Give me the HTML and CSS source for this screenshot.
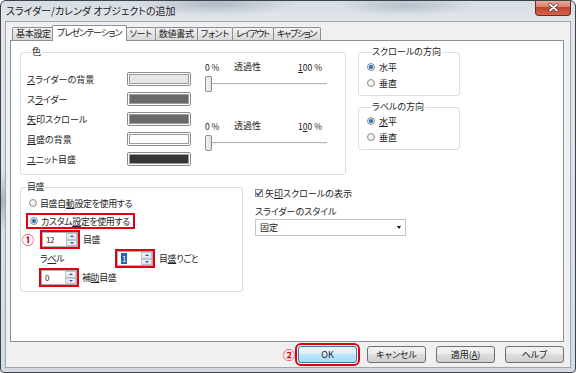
FILE: index.html
```html
<!DOCTYPE html>
<html lang="ja">
<head>
    <meta charset="UTF-8">
    <title>スライダー/カレンダ オブジェクトの追加</title>
    <link rel="stylesheet" href="styles.css">
</head>
<body>
    <div class="window">
        <div class="titlebar">
            <span class="title">スライダー/カレンダ オブジェクトの追加</span>
            <span class="close">
                <svg width="11" height="9" viewBox="0 0 11 9">
                    <path d="M2 1.5 L9 7.5 M9 1.5 L2 7.5" stroke="#6b2a20" stroke-width="3.2" stroke-linecap="round"/>
                    <path d="M2 1.5 L9 7.5 M9 1.5 L2 7.5" stroke="#ffffff" stroke-width="1.8" stroke-linecap="round"/>
                </svg>
            </span>
        </div>

        <div class="client">
            <ul class="tabs">
                <li class="tab">基本設定</li>
                <li class="tab active">プレゼンテーション</li>
                <li class="tab">ソート</li>
                <li class="tab">数値書式</li>
                <li class="tab">フォント</li>
                <li class="tab tight">レイアウト</li>
                <li class="tab tight">キャプション</li>
            </ul>

            <div class="panel">
                <div class="top-row">
                    <fieldset class="group colors">
                        <legend>色</legend>
                        <div class="colors-body">
                            <div class="swatch-list">
                                <div class="swatch-row"><span class="lbl"><u>ス</u>ライダーの背景</span><span class="swatch"><i class="sw-light"></i></span></div>
                                <div class="swatch-row"><span class="lbl">ス<u>ラ</u>イダー</span><span class="swatch"><i class="sw-mid"></i></span></div>
                                <div class="swatch-row"><span class="lbl"><u>矢</u>印スクロール</span><span class="swatch"><i class="sw-mid"></i></span></div>
                                <div class="swatch-row"><span class="lbl"><u>目</u>盛の背景</span><span class="swatch"><i class="sw-white"></i></span></div>
                                <div class="swatch-row"><span class="lbl"><u>ユ</u>ニット目盛</span><span class="swatch"><i class="sw-dark"></i></span></div>
                            </div>
                            <div class="sliders">
                                <div class="slider-block">
                                    <div class="slider-labels"><span class="min">0 %</span><span>透過性</span><span class="max"><u>1</u>00 %</span></div>
                                    <div class="slider"><span class="thumb"></span><span class="track"></span></div>
                                </div>
                                <div class="slider-block second">
                                    <div class="slider-labels"><span class="min">0 %</span><span>透過性</span><span class="max">1<u>0</u>0 %</span></div>
                                    <div class="slider"><span class="thumb"></span><span class="track"></span></div>
                                </div>
                            </div>
                        </div>
                    </fieldset>

                    <div class="dir-col">
                        <fieldset class="group dir">
                            <legend>スクロールの方向</legend>
                            <div class="radio"><span class="dot checked"></span><span>水平</span></div>
                            <div class="radio"><span class="dot"></span><span>垂直</span></div>
                        </fieldset>
                        <fieldset class="group dir second">
                            <legend>ラベルの方向</legend>
                            <div class="radio"><span class="dot checked"></span><span><u>水</u>平</span></div>
                            <div class="radio"><span class="dot"></span><span>垂直</span></div>
                        </fieldset>
                    </div>
                </div>

                <div class="bottom-row">
                    <fieldset class="group ticks">
                        <legend>目盛</legend>
                        <div class="radio indent"><span class="dot"></span><span>目盛自<u>動</u>設定を使用する</span></div>
                        <div class="mark-row">
                            <span class="mark-box radio-box"><span class="radio"><span class="dot checked"></span><span>カスタム<u>設</u>定を使用する</span></span></span>
                        </div>
                        <div class="spin-row first">
                            <span class="num-mark">①</span>
                            <span class="mark-box">
                                <span class="spin"><span class="spin-val">12</span><span class="spin-btns"><b class="up"></b><b class="down"></b></span></span>
                            </span>
                            <span>目盛</span>
                        </div>
                        <div class="spin-row label-row">
                            <span class="row-lbl">ラ<u>ベ</u>ル</span>
                            <span class="mark-box">
                                <span class="spin"><span class="spin-val"><em class="sel">1</em></span><span class="spin-btns"><b class="up"></b><b class="down"></b></span></span>
                            </span>
                            <span>目<u>盛</u>りごと</span>
                        </div>
                        <div class="spin-row minor">
                            <span class="mark-box">
                                <span class="spin"><span class="spin-val">0</span><span class="spin-btns"><b class="up"></b><b class="down"></b></span></span>
                            </span>
                            <span>補<u>助</u>目盛</span>
                        </div>
                    </fieldset>

                    <div class="style-col">
                        <div class="check-row">
                            <span class="check">
                                <svg width="8" height="8" viewBox="0 0 8 8"><path d="M1.3 4.2 L3.2 6.2 L6.8 1.3" fill="none" stroke="#33457a" stroke-width="1.4"/></svg>
                            </span>
                            <span>矢<u>印</u>スクロールの表示</span>
                        </div>
                        <div class="style-label">スライダーのスタイル</div>
                        <div class="combo"><span>固定</span><span class="arrow"></span></div>
                    </div>
                </div>
            </div>

            <div class="buttons">
                <span class="ok-wrap">
                    <span class="num-mark">②</span>
                    <button class="btn default mark-outline">OK</button>
                </span>
                <button class="btn">キャンセル</button>
                <button class="btn">適用(<u>A</u>)</button>
                <button class="btn">ヘルプ</button>
            </div>
        </div>
    </div>
</body>
</html>
```

FILE: styles.css
```css
* {
    box-sizing: border-box;
}
body {
    margin: 0;
    font-family: "Noto Sans CJK JP", "Liberation Sans", sans-serif;
    font-size: 9px;
    font-feature-settings: "palt";
    color: #222222;
    background: #ffffff;
}
u {
    text-underline-offset: 1px;
}

/* window frame */
.window {
    width: 576px;
    height: 373px;
    border: 1px solid #3f4348;
    border-radius: 6px 6px 4px 4px;
    overflow: hidden;
    display: flex;
    flex-direction: column;
    background:
        radial-gradient(ellipse 80px 12px at 215px 3px, rgba(105, 120, 138, 0.35), transparent),
        radial-gradient(ellipse 70px 10px at 405px 5px, rgba(105, 120, 138, 0.3), transparent),
        radial-gradient(ellipse 14px 30px at 1px 200px, rgba(80, 90, 100, 0.35), transparent),
        linear-gradient(#d6dde5, #e3e7ec 20px, #d4dbe2);
}
.titlebar {
    height: 20px;
    display: flex;
    align-items: flex-start;
}
.title {
    padding-left: 5px;
    line-height: 20px;
    font-size: 10px;
    color: #1b1b1b;
}
.close {
    margin: -1px 4px 0 auto;
    width: 36px;
    height: 16px;
    display: flex;
    align-items: center;
    justify-content: center;
    border: 1px solid #6e2c22;
    border-top: none;
    border-radius: 0 0 4px 4px;
    background: linear-gradient(#eab2a3, #d88370 45%, #c2432c 50%, #d2644c);
}

/* client area */
.client {
    margin: 0 4px;
    height: 347px;
    border: 1px solid #9ba5b0;
    background: #f0f0f0;
    padding: 3px 6px 0 4px;
}
.tabs {
    display: flex;
    align-items: flex-end;
    height: 15px;
    margin: 0 0 0 2px;
    padding: 0;
    list-style: none;
    position: relative;
    z-index: 1;
}
.tab {
    height: 13px;
    line-height: 12px;
    padding: 0 3px;
    margin-right: -1px;
    border: 1px solid #8b8e96;
    border-bottom: none;
    border-radius: 2px 2px 0 0;
    background: linear-gradient(#f3f3f3, #e4e4e4 50%, #d9d9d9);
    white-space: nowrap;
    letter-spacing: -0.3px;
}
.tab.tight {
    letter-spacing: -1.3px;
    padding: 0 4px 0 3px;
}
.tab.active {
    height: 16px;
    line-height: 14px;
    margin: 0 -1px -1px -2px;
    padding: 0 4px;
    background: #ffffff;
    letter-spacing: -0.9px;
    position: relative;
    z-index: 2;
}
.panel {
    height: 302px;
    border: 1px solid #8b8e96;
    background: #ffffff;
    padding: 5px 9px;
}

/* group boxes */
.group {
    margin: 0;
    padding: 0;
    min-width: 0;
    border: 1px solid #d5dfe5;
    border-radius: 3px;
}
.group legend {
    margin-left: 4px;
    padding: 0 1px;
    line-height: 12px;
}
.top-row,
.bottom-row {
    display: flex;
    gap: 12px;
    align-items: flex-start;
}
.bottom-row {
    margin-top: 6px;
}

/* colours */
.colors {
    width: 326px;
    padding: 3px 6px 5px 6px;
}
.colors-body {
    display: flex;
}
.swatch-list {
    width: 164px;
    margin-top: 8px;
}
.swatch-row {
    height: 20px;
    display: flex;
    align-items: center;
}
.lbl {
    width: 100px;
}
.swatch {
    width: 64px;
    height: 14px;
    padding: 1px;
    border: 1px solid #8c8d8e;
    border-radius: 2px;
    background: #fbfbfb;
}
.swatch i {
    display: block;
    height: 100%;
    border: 1px solid #9c9c9c;
}
.sw-light { background: #e6e6e6; }
.sw-mid { background: #696969; }
.sw-white { background: #ffffff; }
.sw-dark { background: #363636; }

.sliders {
    width: 122px;
    margin-left: 14px;
}
.slider-block.second {
    margin-top: 28px;
}
.slider-labels {
    display: flex;
    height: 12px;
    line-height: 12px;
    padding-right: 5px;
}
.slider-labels .min {
    width: 29px;
    font-size: 8.5px;
}
.slider-labels .max {
    margin-left: auto;
    font-size: 8.5px;
}
.slider {
    display: flex;
    align-items: center;
    height: 17px;
    margin-top: 2px;
}
.thumb {
    width: 7px;
    height: 16px;
    border: 1px solid #8d8d8d;
    border-radius: 2px;
    background: linear-gradient(90deg, #f7f7f7, #dedede);
}
.track {
    flex: 1;
    height: 2px;
    border-top: 1px solid #b3b3b3;
    border-bottom: 1px solid #f4f4f4;
    background: #e2e2e2;
}

/* direction groups */
.dir-col {
    width: 102px;
}
.dir {
    padding: 1px 0 4px 8px;
}
.dir.second {
    margin-top: 5px;
    padding-top: 0;
}
.radio {
    display: flex;
    align-items: center;
    gap: 4px;
    height: 16px;
}
.dot {
    width: 8px;
    height: 8px;
    border-radius: 50%;
    border: 1px solid #8e8f8f;
    background: radial-gradient(circle at 40% 40%, #ffffff, #dcdcdc);
}
.dot.checked {
    background: radial-gradient(circle, #1e5d93 0, #3f8fcf 1.8px, #e8e8e8 2.6px, #d4d4d4 4px);
}

/* ticks group */
.ticks {
    width: 223px;
    padding: 2px 0 4px 1px;
    letter-spacing: -0.4px;
}
.ticks .radio {
    gap: 3px;
}
.radio.indent {
    margin-left: 7px;
}
.mark-row {
    margin-top: 2px;
}
.mark-box {
    display: inline-flex;
    border: 2px solid #e1000f;
}
.radio-box {
    margin-left: 4px;
    padding: 0 3px 0 2px;
    height: 16px;
    align-items: center;
}
.radio-box .radio {
    height: 12px;
}
.spin-row {
    display: flex;
    align-items: center;
    gap: 3px;
    height: 19px;
}
.spin-row.first {
    margin-top: 1px;
}
.spin-row.first .mark-box {
    margin-left: 3px;
}
.num-mark {
    color: #e1000f;
    font-size: 12px;
    font-weight: bold;
    line-height: 12px;
    letter-spacing: 0;
}
.row-lbl {
    margin-left: 18px;
    width: 71px;
}
.label-row {
    gap: 4px;
}
.spin-row.minor {
    margin-left: 17px;
}
.spin {
    width: 36px;
    height: 15px;
    display: flex;
    border: 1px solid #abadb3;
    background: #ffffff;
}
.spin-val {
    flex: 1;
    padding-left: 3px;
    line-height: 13px;
    font-size: 8px;
}
.sel {
    font-style: normal;
    background: #2b62b8;
    color: #ffffff;
    padding: 0 1px;
}
.spin-btns {
    width: 11px;
    display: flex;
    flex-direction: column;
}
.spin-btns b {
    flex: 1;
    display: flex;
    align-items: center;
    justify-content: center;
    border: 1px solid #b9c3d1;
    background: linear-gradient(#f2f5fa, #dde4ee);
}
.spin-btns b::after {
    content: "";
    border-left: 2px solid transparent;
    border-right: 2px solid transparent;
}
.spin-btns .up::after {
    border-bottom: 2px solid #4d5a6e;
}
.spin-btns .down::after {
    border-top: 2px solid #4d5a6e;
}

/* style column */
.style-col {
    width: 151px;
}
.check-row {
    display: flex;
    align-items: center;
    gap: 2px;
    height: 14px;
    margin-top: 5px;
}
.check {
    width: 8px;
    height: 8px;
    display: flex;
    border: 1px solid #8e8f8f;
    background: linear-gradient(#f0f0f0, #fbfbfb);
}
.check svg {
    margin: -1px;
}
.style-label {
    height: 12px;
    line-height: 12px;
    margin-top: 6px;
}
.combo {
    margin-top: 1px;
    height: 17px;
    display: flex;
    align-items: center;
    padding: 0 4px;
    border: 1px solid #c5c5c5;
    background: #ffffff;
}
.combo .arrow {
    margin-left: auto;
    border-left: 2.5px solid transparent;
    border-right: 2.5px solid transparent;
    border-top: 3px solid #111111;
}

/* dialog buttons */
.buttons {
    display: flex;
    justify-content: flex-end;
    align-items: center;
    gap: 10px;
    margin-top: 4px;
}
.ok-wrap {
    display: flex;
    align-items: center;
    gap: 3px;
}
.btn {
    width: 59px;
    height: 17px;
    padding: 0;
    font: inherit;
    font-feature-settings: "palt";
    color: #222222;
    border: 1px solid #707070;
    border-radius: 3px;
    background: linear-gradient(#f2f2f2, #ebebeb 45%, #dddddd 50%, #cfcfcf);
}
.btn.default {
    border-color: #3c7fb1;
    background: linear-gradient(#eaf6fd, #d9f0fc 45%, #bee6fd 50%, #a7d9f5);
}
.mark-outline {
    outline: 2px solid #e1000f;
    outline-offset: 1px;
}
```
